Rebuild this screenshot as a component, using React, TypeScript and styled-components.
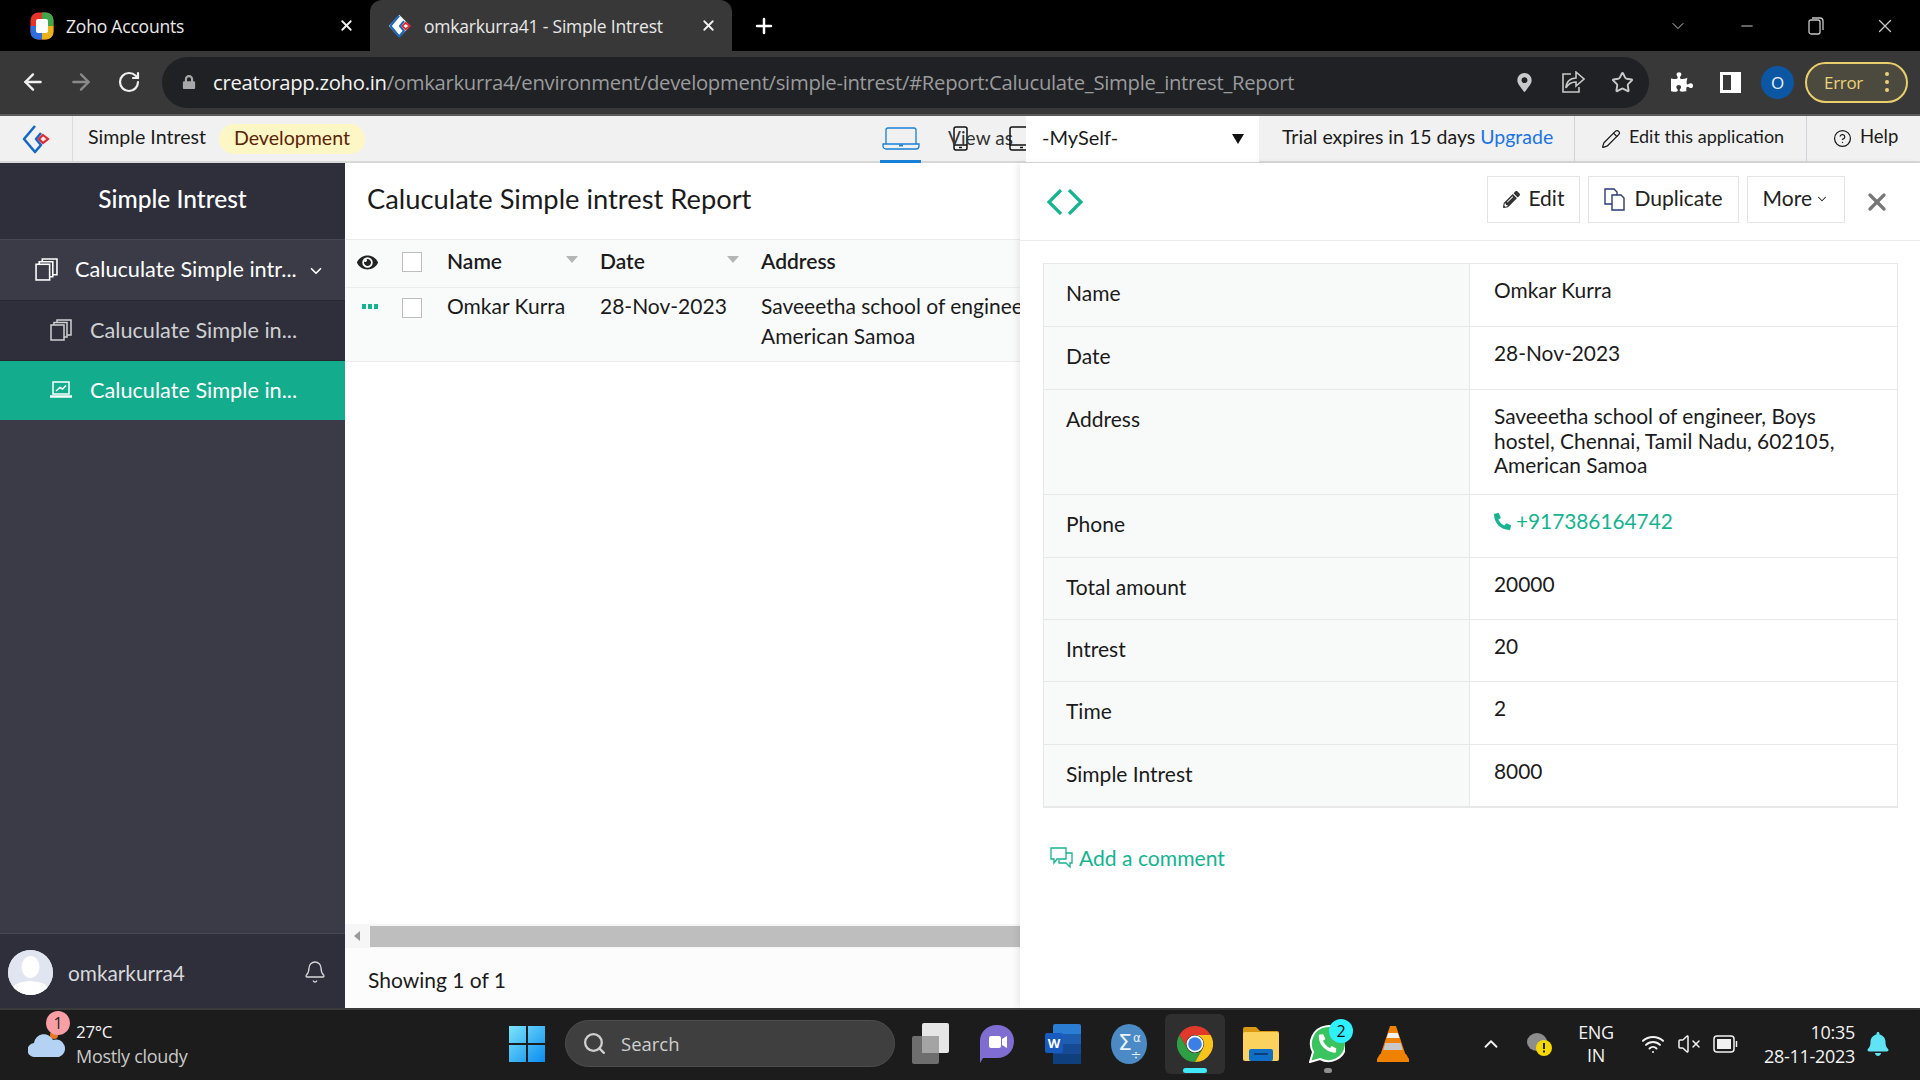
import styled, { createGlobalStyle } from 'styled-components'
import {
  ArrowLeft, ArrowRight, RotateCw, Star, ChevronDown, ChevronUp, Bell, Search, Wifi, VolumeX, X, Plus,
  Pencil, CircleHelp, Minus,
} from 'lucide-react'
import { FaEye, FaLock, FaMapMarkerAlt, FaPencilAlt, FaPhoneAlt, FaPuzzlePiece, FaBell } from 'react-icons/fa'

const GlobalStyle = createGlobalStyle`
  html, body { margin: 0; padding: 0; background: #fff; }
  * { box-sizing: border-box; }
  body { font-family: Lato, "Open Sans", sans-serif; color: #1b1b1b; }
`

const Page = styled.div`
  width: 1920px;
  height: 1080px;
  display: flex;
  flex-direction: column;
  overflow: hidden;
`

/* browser chrome */
const TabStrip = styled.div`
  height: 51px;
  background: #000;
  display: flex;
  align-items: stretch;
  font-family: "Open Sans", sans-serif;
  font-size: 17.500px;
  color: #e8e8e8;
`
const Tab = styled.div<{ $active?: boolean }>`
  width: ${(p) => (p.$active ? '362px' : '370px')};
  display: flex;
  align-items: center;
  padding-left: ${(p) => (p.$active ? '18px' : '30px')};
  background: ${(p) => (p.$active ? '#383838' : 'transparent')};
  border-radius: 12px 12px 0 0;
`
const TabTitle = styled.span`
  margin-left: 12px;
  flex: 1;
  white-space: nowrap;
  letter-spacing: -0.2px;
`
const TabClose = styled.span`
  width: 32px;
  display: flex;
  color: #f2f2f2;
`
const NewTab = styled.div`
  width: 64px;
  display: flex;
  align-items: center;
  justify-content: center;
  color: #fff;
`
const WindowControls = styled.div`
  margin-left: auto;
  display: flex;
  align-items: center;
  padding-right: 1px;
  color: #c8c8c8;
`
const WindowButton = styled.div`
  width: 69px;
  display: flex;
  justify-content: center;
`
const NavBar = styled.div`
  height: 65px;
  background: #383838;
  border-bottom: 2px solid #5a5a5a;
  display: flex;
  align-items: center;
  padding: 0 12px 1px 9px;
`
const NavButton = styled.div<{ $dim?: boolean }>`
  width: 48px;
  display: flex;
  justify-content: center;
  color: ${(p) => (p.$dim ? '#8a8a8a' : '#f0f0f0')};
`
const Omnibox = styled.div`
  margin-left: 9px;
  width: 1487px;
  height: 51px;
  border-radius: 26px;
  background: #202124;
  display: flex;
  align-items: center;
  padding: 0 2px 0 20px;
  font-family: "Open Sans", sans-serif;
  font-size: 20.300px;
  letter-spacing: -0.3px;
  color: #9a9b9d;
`
const Url = styled.span`
  margin-left: 17px;
  white-space: nowrap;
  flex: 1;
  strong { font-weight: 400; color: #f4f4f4; }
`
const OmniIcon = styled.div`
  width: 49px;
  display: flex;
  justify-content: center;
  color: #c9c9c9;
`
const ToolIcon = styled.div`
  width: 48px;
  display: flex;
  justify-content: center;
  color: #fff;
`
const PuzzleIcon = styled(ToolIcon)`
  margin-left: 9px;
`
const ProfileDot = styled.div`
  width: 33px;
  height: 33px;
  margin: 0 7px;
  border-radius: 50%;
  background: #0b57a4;
  color: #e8f0ff;
  font-size: 17px;
  font-family: "Open Sans", sans-serif;
  display: flex;
  align-items: center;
  justify-content: center;
`
const ErrorPill = styled.div`
  margin-left: 4px;
  width: 103px;
  height: 41px;
  border-radius: 21px;
  border: 2px solid #e9cf6c;
  background: #4c4a3e;
  color: #ecd277;
  font-family: "Open Sans", sans-serif;
  font-size: 17px;
  letter-spacing: -0.3px;
  display: flex;
  align-items: center;
  justify-content: space-between;
  padding: 0 17px 0 17px;
`
const MenuDots = styled.span`
  display: flex;
  flex-direction: column;
  gap: 4px;
  i { width: 4px; height: 4px; border-radius: 50%; background: #ecd277; }
`

/* app bar */
const AppBar = styled.div`
  height: 47px;
  background: #f1f1f1;
  border-bottom: 2px solid #d8d8d8;
  display: flex;
  align-items: stretch;
  font-size: 19.600px;
`
const LogoCell = styled.div`
  width: 73px;
  border-right: 1px solid #d9dde3;
  display: flex;
  align-items: center;
  justify-content: center;
`
const AppName = styled.div`
  margin-left: 15px;
  padding-bottom: 4px;
  display: flex;
  align-items: center;
  width: 131px;
  white-space: nowrap;
`
const EnvBadge = styled.div`
  align-self: center;
  width: 146px;
  height: 30px;
  padding-bottom: 2px;
  border-radius: 15px;
  background: #fdf7c5;
  color: #5b2308;
  display: flex;
  align-items: center;
  justify-content: center;
`
const LaptopTab = styled.div`
  margin-left: 515px;
  width: 41px;
  height: 47px;
  border-bottom: 3px solid #1680d6;
  display: flex;
  align-items: center;
  justify-content: center;
`
const ViewAs = styled.div`
  margin-left: 27px;
  width: 78px;
  overflow: hidden;
  display: flex;
  align-items: center;
  white-space: nowrap;
  font-size: 19px;
  color: #333;
`
const PhoneShape = styled.svg`
  margin-left: 5px;
  flex-shrink: 0;
`
const ViewAsText = styled.span`
  margin-left: -20px;
  margin-right: -4px;
  padding-bottom: 3px;
  letter-spacing: 0.1px;
`
const TabletShape = styled.svg`
  flex-shrink: 0;
`
const UserSelect = styled.div`
  width: 233px;
  background: #fff;
  display: flex;
  align-items: center;
  justify-content: space-between;
  padding: 0 15px 5px 16px;
  font-size: 20px;
  margin-bottom: -1px;
`
const Caret = styled.span`
  width: 0;
  height: 0;
  margin-top: 5px;
  border-left: 6px solid transparent;
  border-right: 6px solid transparent;
  border-top: 10px solid #111;
`
const Trial = styled.div`
  width: 316px;
  padding: 0 0 5px 23px;
  display: flex;
  align-items: center;
  white-space: nowrap;
  font-size: 19.500px;
  border-right: 1px solid #cfd3da;
  a { color: #1a73e8; margin-left: 5px; }
`
const EditApp = styled.div`
  width: 232px;
  padding-left: 26px;
  display: flex;
  align-items: center;
  gap: 8px;
  white-space: nowrap;
  font-size: 18px;
  border-right: 1px solid #cfd3da;
  span { padding-bottom: 5px; }
`
const HelpLink = styled.div`
  padding-left: 26px;
  display: flex;
  align-items: center;
  gap: 8px;
  font-size: 18.500px;
  span { padding-bottom: 5px; }
`

/* main */
const Main = styled.div`
  flex: 1;
  display: flex;
  min-height: 0;
`
const Sidebar = styled.aside`
  width: 345px;
  background: #3a3b47;
  display: flex;
  flex-direction: column;
  color: #fff;
`
const SideTitle = styled.div`
  height: 76px;
  padding-bottom: 6px;
  background: #2e2f3a;
  display: flex;
  align-items: center;
  justify-content: center;
  font-size: 24.500px;
  font-weight: 500;
`
const SideRow = styled.div<{ $kind: 'parent' | 'child' | 'active' }>`
  height: ${(p) => (p.$kind === 'parent' ? '61px' : '60px')};
  display: flex;
  align-items: center;
  padding-left: ${(p) => (p.$kind === 'parent' ? '35px' : '50px')};
  padding-bottom: 2px;
  gap: ${(p) => (p.$kind === 'parent' ? '17px' : '18px')};
  font-size: 21.700px;
  white-space: nowrap;
  background: ${(p) => (p.$kind === 'parent' ? '#3a3b47' : p.$kind === 'active' ? '#13ac8c' : '#2e2f3a')};
  color: ${(p) => (p.$kind === 'child' ? '#cfcfd2' : '#fff')};
  border-top: 1px solid ${(p) => (p.$kind === 'parent' ? '#474854' : '#26272f')};
`
const SideChevron = styled.span`
  margin-left: -7px;
  margin-top: 4px;
  display: flex;
`
const SideSpacer = styled.div`
  flex: 1;
`
const SideFooter = styled.div`
  height: 75px;
  background: #2e2f3a;
  border-top: 1px solid #474854;
  display: flex;
  align-items: center;
  padding: 2px 18px 0 8px;
  font-size: 20.800px;
  color: #d8d8da;
`
const Avatar = styled.div`
  width: 45px;
  height: 45px;
  border-radius: 50%;
  background: #dfe3ee;
  overflow: hidden;
  margin-right: 15px;
  display: flex;
  svg { display: block; }
`
const UserName = styled.span`
  flex: 1;
`

const ReportPane = styled.section`
  width: 675px;
  flex-shrink: 0;
  display: flex;
  flex-direction: column;
  overflow: hidden;
`
const ReportTitle = styled.h1`
  margin: 0;
  height: 76px;
  display: flex;
  align-items: center;
  padding: 0 0 6px 22px;
  font-size: 27.300px;
  font-weight: 400;
  white-space: nowrap;
`
const GridRow = styled.div<{ $head?: boolean }>`
  width: 1000px;
  height: ${(p) => (p.$head ? '48px' : '75px')};
  display: flex;
  align-items: flex-start;
  background: #f9fafa;
  border-top: 1px solid #ececec;
  border-bottom: ${(p) => (p.$head ? '0' : '1px solid #ececec')};
  padding-top: ${(p) => (p.$head ? '9px' : '6px')};
  font-size: 21px;
  line-height: 30px;
  font-weight: ${(p) => (p.$head ? 600 : 400)};
`
const ActionCell = styled.div`
  width: 57px;
  height: 24px;
  padding-left: 12px;
  display: flex;
  align-items: center;
  margin-top: 1px;
`
const DotsGreen = styled.span`
  display: flex;
  gap: 2px;
  margin-left: 5px;
  margin-top: -1px;
  i { width: 4px; height: 5px; background: #13b48f; }
`
const Check = styled.span<{ $low?: boolean }>`
  width: 20px;
  height: 20px;
  margin-top: ${(p) => (p.$low ? '4px' : '3px')};
  border: 1px solid #bdbdbd;
  background: #fff;
`
const NameCol = styled.div`
  margin: -3px 0 0 25px;
  width: 153px;
  position: relative;
  white-space: nowrap;
`
const DateCol = styled.div`
  margin-top: -3px;
  width: 161px;
  position: relative;
  white-space: nowrap;
`
const SortCaret = styled.span`
  position: absolute;
  right: 22px;
  top: 10px;
  border-left: 6px solid transparent;
  border-right: 6px solid transparent;
  border-top: 7px solid #b5b5b5;
`
const AddressCol = styled.div`
  margin-top: -3px;
  white-space: nowrap;
`
const EmptyGrid = styled.div`
  flex: 1;
`
const ScrollTrack = styled.div`
  height: 24px;
  background: #f6f6f6;
  display: flex;
  align-items: center;
  padding-left: 9px;
`
const ScrollArrow = styled.span`
  border-top: 5px solid transparent;
  border-bottom: 5px solid transparent;
  border-right: 6px solid #999;
`
const ScrollThumb = styled.div`
  margin-left: 10px;
  flex: 1;
  height: 21px;
  background: #bebebe;
`
const GridFooter = styled.div`
  height: 60px;
  background: #fcfcfc;
  display: flex;
  align-items: center;
  padding: 2px 0 0 23px;
  font-size: 21px;
`

const DetailPanel = styled.section`
  flex: 1;
  position: relative;
  background: #fff;
  box-shadow: -3px 0 6px rgba(0, 0, 0, 0.07);
  display: flex;
  flex-direction: column;
`
const DetailHead = styled.div`
  height: 78px;
  border-bottom: 1px solid #ececec;
  display: flex;
  align-items: center;
  padding: 0 19px 0 27px;
  gap: 8px;
`
const PagerIcon = styled.div`
  margin-right: auto;
  display: flex;
`
const ActionButton = styled.button<{ $tight?: boolean }>`
  height: 47px;
  margin-bottom: 5px;
  padding: 0 15px 4px;
  border: 1px solid #e4e4e4;
  background: #fff;
  display: flex;
  align-items: center;
  gap: ${(p) => (p.$tight ? '3px' : '8px')};
  font-family: inherit;
  font-size: 21px;
  color: #222;
  svg { margin-top: 4px; }
`
const CloseButton = styled.div`
  width: 48px;
  display: flex;
  justify-content: center;
  color: #777;
`
const DetailTable = styled.div`
  margin: 22px 22px 0 23px;
  border: 1px solid #e8e8e8;
  border-bottom-width: 2px;
`
const DetailRow = styled.div<{ $h?: number }>`
  display: grid;
  grid-template-columns: 426px 1fr;
  height: ${(p) => p.$h ?? 62.4}px;
  border-top: 1px solid #e8e8e8;
  &:first-child { border-top: 0; }
  line-height: 24.800px;
`
const FieldLabel = styled.div`
  background: #f8f9f9;
  border-right: 1px solid #e8e8e8;
  padding: 17px 0 0 22px;
  font-size: 21px;
`
const FieldValue = styled.div`
  padding: 14px 44px 0 24px;
  font-size: 20.900px;
`
const PhoneLink = styled.span`
  color: #13b48f;
  display: flex;
  align-items: center;
  gap: 5px;
  font-size: 20.800px;
`
const CommentLink = styled.div`
  margin: 37px 0 0 30px;
  display: flex;
  align-items: center;
  gap: 6px;
  color: #13b48f;
  font-size: 21.100px;
`

/* taskbar */
const Taskbar = styled.footer`
  height: 72px;
  background: #1c1c1c;
  border-top: 2px solid #3b3b3b;
  padding-bottom: 3px;
  display: flex;
  align-items: center;
  font-family: "Open Sans", sans-serif;
  color: #f2f2f2;
`
const Weather = styled.div`
  width: 494px;
  padding-left: 28px;
  display: flex;
  align-items: center;
  gap: 10px;
  position: relative;
`
const WeatherBadge = styled.span`
  position: absolute;
  left: 46px;
  top: -9px;
  width: 24px;
  height: 24px;
  border-radius: 50%;
  background: #f89fa5;
  color: #222;
  font-size: 16px;
  display: flex;
  align-items: center;
  justify-content: center;
`
const WeatherText = styled.div`
  font-size: 17px;
  letter-spacing: -0.3px;
  line-height: 24px;
  small { display: block; font-size: 18px; color: #c9c9c9; }
`
const TaskCell = styled.div<{ $on?: boolean }>`
  width: ${(p) => (p.$on ? '60px' : '66px')};
  margin: ${(p) => (p.$on ? '0 3px' : '0')};
  height: 60px;
  position: relative;
  display: flex;
  align-items: center;
  justify-content: center;
  border-radius: 6px;
  background: ${(p) => (p.$on ? '#2f2f2f' : 'transparent')};
`
const RunningBar = styled.span`
  position: absolute;
  bottom: 1px;
  left: 18px;
  width: 24px;
  height: 5px;
  border-radius: 3px;
  background: #3fe9f7;
`
const RunningDot = styled.span`
  position: absolute;
  bottom: 1px;
  left: 30px;
  width: 8px;
  height: 5px;
  border-radius: 3px;
  background: #8f8f8f;
`
const CountBadge = styled.span`
  position: absolute;
  right: 7px;
  top: 5px;
  width: 24px;
  height: 24px;
  border-radius: 50%;
  background: #2ef0ff;
  color: #111;
  font-size: 16px;
  display: flex;
  align-items: center;
  justify-content: center;
`
const SearchBox = styled.div`
  width: 330px;
  height: 47px;
  margin-left: 5px;
  margin-right: 3px;
  border-radius: 24px;
  background: #3f3f3f;
  border: 1px solid #4e4e4e;
  display: flex;
  align-items: center;
  gap: 14px;
  padding-left: 16px;
  font-size: 18.500px;
  color: #cfcfcf;
`
const Tray = styled.div`
  margin-left: 32px;
  flex: 1;
  display: flex;
  align-items: center;
`
const TrayIcon = styled.div<{ $w: number }>`
  width: ${(p) => p.$w}px;
  display: flex;
  justify-content: center;
  color: #f2f2f2;
`
const WifiCell = styled(TrayIcon)`
  margin-left: -3px;
`
const LangBlock = styled.div`
  width: 84px;
  text-align: center;
  font-size: 18px;
  line-height: 23px;
  letter-spacing: -0.3px;
`
const Clock = styled.div`
  width: 112px;
  text-align: right;
  font-size: 18px;
  line-height: 24px;
  letter-spacing: -0.3px;
`

const Stack = ({ size = 22, color = 'currentColor' }: { size?: number; color?: string }) => (
  <svg width={size} height={size} viewBox="0 0 22 22" fill="none" stroke={color} strokeWidth="1.5">
    <rect x="1" y="6" width="13" height="15" />
    <path d="M4 6V3.500h13V18h-3" />
    <path d="M7 3.500V1h14v15h-4" />
  </svg>
)

const CreatorLogo = ({ size = 30, halo }: { size?: number; halo?: boolean }) => (
  <svg width={size} height={size} viewBox="0 0 30 30" fill="none">
    {halo && <path d="M14 1 1 15l13 14 14-14z" fill="#fff" />}
    <path d="M14 2 3 15l11 13 6-7-5-6 5-6" stroke="#1668c7" strokeWidth="2.600" strokeLinejoin="round" />
    <path d="m22 11 5 4-5 4-4-4z" stroke="#e2292f" strokeWidth="2.200" />
  </svg>
)

const AccountsLogo = () => (
  <svg width="24" height="28" viewBox="0 0 24 28">
    <rect x="0.500" y="0.500" width="23" height="27" rx="8" fill="#e5352b" />
    <path d="M12 .5h4a7.500 7.500 0 0 1 7.500 7.500v6H12z" fill="#3fa64a" />
    <path d="M12 27.500h4a7.500 7.500 0 0 0 7.500-7.500v-6H12z" fill="#e9b21a" />
    <path d="M12 27.500H8A7.500 7.500 0 0 1 .5 20v-6H12z" fill="#2f6fdc" />
    <rect x="6" y="7" width="12" height="14" rx="2" fill="#fff" />
  </svg>
)

const LaptopBlue = () => (
  <svg width="38" height="23" viewBox="0 0 38 23" fill="none" stroke="#1680d6" strokeWidth="1.300">
    <path d="M4 17V3a2 2 0 0 1 2-2h26a2 2 0 0 1 2 2v14" />
    <path d="M1 17h36v2a3 3 0 0 1-3 3H4a3 3 0 0 1-3-3z" />
    <path d="M17 18.500h4" strokeWidth="1.800" />
  </svg>
)

const WindowsLogo = () => (
  <svg width="36" height="36" viewBox="0 0 36 36">
    <defs>
      <linearGradient id="win" x1="0" y1="0" x2="1" y2="1">
        <stop offset="0" stopColor="#7be4fb" />
        <stop offset="1" stopColor="#0a8bf0" />
      </linearGradient>
    </defs>
    <path d="M0 0h17v17H0zM19 0h17v17H19zM0 19h17v17H0zM19 19h17v17H19z" fill="url(#win)" />
  </svg>
)

const ChromeLogo = () => (
  <svg width="36" height="36" viewBox="0 0 36 36">
    <path d="M2.400 9A18 18 0 0 1 33.600 9H18A9 9 0 0 0 10.200 22.500Z" fill="#e0392c" />
    <path d="M2.400 9 10.200 22.500A9 9 0 0 0 25.800 22.500L18 36A18 18 0 0 1 2.400 9Z" fill="#2f9e44" />
    <path d="M33.600 9H18A9 9 0 0 1 25.800 22.500L18 36A18 18 0 0 0 33.600 9Z" fill="#f9c31c" />
    <circle cx="18" cy="18" r="8.500" fill="#fff" />
    <circle cx="18" cy="18" r="6.800" fill="#3b7fe6" />
  </svg>
)

const WordLogo = () => (
  <svg width="36" height="40" viewBox="0 0 36 40">
    <rect x="8" y="0" width="28" height="40" rx="2" fill="#2b7cd3" />
    <rect x="8" y="10" width="28" height="10" fill="#1e5eb0" />
    <rect x="8" y="20" width="28" height="10" fill="#174a94" />
    <rect x="8" y="30" width="28" height="10" fill="#103f7d" />
    <rect x="0" y="9" width="18" height="20" rx="2" fill="#185abd" />
    <text x="9" y="24" textAnchor="middle" fontSize="13" fontFamily="Open Sans" fontWeight="700" fill="#fff">W</text>
  </svg>
)

const TeamsLogo = () => (
  <svg width="34" height="38" viewBox="0 0 34 38">
    <path d="M17 0c10 0 17 7 17 16 0 10-7 17-17 17H3l-3 5V16C0 7 7 0 17 0z" fill="#7f6dd1" />
    <rect x="9" y="11" width="12" height="12" rx="2" fill="#fff" />
    <path d="m22 14 5-3v12l-5-3z" fill="#fff" />
  </svg>
)

const MathLogo = () => (
  <svg width="36" height="40" viewBox="0 0 36 40">
    <ellipse cx="18" cy="20" rx="18" ry="20" fill="#4b8ac4" />
    <text x="14" y="26" textAnchor="middle" fontSize="22" fontFamily="DejaVu Sans" fill="#e8f2fb">Σ</text>
    <text x="26" y="18" textAnchor="middle" fontSize="12" fontFamily="DejaVu Sans" fill="#e8f2fb">α</text>
    <text x="25" y="35" textAnchor="middle" fontSize="13" fontFamily="DejaVu Sans" fill="#e8f2fb">÷</text>
  </svg>
)

const FolderLogo = () => (
  <svg width="36" height="34" viewBox="0 0 36 34">
    <path d="M0 2a2 2 0 0 1 2-2h11l4 4h17a2 2 0 0 1 2 2v4H0z" fill="#d99a12" />
    <rect x="0" y="5" width="36" height="29" rx="2" fill="#fbd25e" />
    <rect x="6" y="22" width="24" height="12" rx="2" fill="#0f6fc6" />
    <rect x="11" y="26" width="14" height="2" fill="#0b3e7a" />
  </svg>
)

const WhatsappLogo = () => (
  <svg width="36" height="38" viewBox="0 0 36 38">
    <path d="M1 37l3-10A17.500 17.500 0 1 1 11 34z" fill="#39c45f" stroke="#fff" strokeWidth="2" />
    <path d="M11.500 11c0 8 6 14 14 15" fill="none" stroke="#fff" strokeWidth="3.500" strokeLinecap="round" />
    <path d="M11 10.500l3-1.500 2.500 5-3 2zM26 26.500l1.500-3-5-2.500-2 3z" fill="#fff" />
  </svg>
)

const VlcLogo = () => (
  <svg width="32" height="36" viewBox="0 0 32 36">
    <path d="M13 0h6l10 30H3z" fill="#ef8200" />
    <path d="M11.300 7h9.400l1.800 5H9.600z" fill="#f2f2f2" />
    <path d="M8.300 17h15.400l2 7H6.300z" fill="#c9c9c9" />
    <path d="M3 28h26l3 5v3H0v-3z" fill="#ef8200" />
  </svg>
)

const CloudIcon = () => (
  <svg width="38" height="26" viewBox="0 0 38 26">
    <circle cx="26" cy="4" r="4" fill="#e9781f" />
    <path d="M7 26a7 7 0 0 1-1-14 10 10 0 0 1 19-3 8.500 8.500 0 0 1 6 17z" fill="#b4d3f4" />
  </svg>
)

const TaskViewIcon = () => (
  <svg width="38" height="46" viewBox="0 0 38 46">
    <rect x="0" y="15" width="27" height="28" rx="2" fill="#6e6e6e" />
    <rect x="10" y="2" width="27" height="30" rx="2" fill="#e6e6e6" />
    <rect x="10" y="15" width="17" height="17" fill="#a4a4a4" />
  </svg>
)

const DuplicateIcon = () => (
  <svg width="22" height="24" viewBox="0 0 22 24" fill="none" stroke="#2a3a7a" strokeWidth="1.400">
    <path d="M1 2h9l3 3v12H1z" />
    <path d="M8 8h9l3 3v12H8z" fill="#fff" />
  </svg>
)

const ReportIcon = () => (
  <svg width="22" height="17" viewBox="0 0 22 17" fill="none" stroke="#fff" strokeWidth="1.500">
    <rect x="3" y="1" width="16" height="12" />
    <path d="M0 15.500h22" strokeWidth="2.500" />
    <path d="m6 10 4-3.500 2.500 1.500 3.500-3.500" />
  </svg>
)

const PagerChevrons = () => (
  <svg width="36" height="26" viewBox="0 0 36 26" fill="none" stroke="#13b48f" strokeWidth="3.200">
    <path d="M14 1 2 13l12 12M22 1l12 12-12 12" />
  </svg>
)

const CommentIcon = () => (
  <svg width="23" height="22" viewBox="0 0 23 22" fill="none" stroke="#13b48f" strokeWidth="1.300">
    <path d="M1 1h15v11H7l-3 4v-4H1z" />
    <path d="M16 6h6v10h-2v4l-4-4H9v-3" />
  </svg>
)

const AvatarFace = () => (
  <svg width="45" height="45" viewBox="0 0 45 45">
    <rect width="45" height="45" fill="#e1e5ef" />
    <ellipse cx="22.500" cy="17" rx="9" ry="11" fill="#fff" />
    <path d="M2 45c1-11 9-13 20-14 12 1 20 3 21 14z" fill="#fff" />
  </svg>
)

const SidePanelIcon = () => (
  <svg width="21" height="21" viewBox="0 0 21 21">
    <path d="M0 0h21v21H0z" fill="#fff" />
    <path d="M3 3h8v15H3z" fill="#383838" />
  </svg>
)

const ShareIcon = () => (
  <svg width="23" height="23" viewBox="0 0 23 23" fill="none" stroke="#c9c9c9" strokeWidth="1.600">
    <path d="M14 1l8 7-8 7v-4c-5 0-8 2-10 6 0-6 4-10 10-10z" />
    <path d="M9 3H1v18h16v-5" />
  </svg>
)

const RestoreIcon = () => (
  <svg width="16" height="18" viewBox="0 0 16 18" fill="none" stroke="#c8c8c8" strokeWidth="1.300">
    <rect x="1" y="3" width="11" height="14" rx="2" />
    <path d="M4 1h8a3 3 0 0 1 3 3v9" />
  </svg>
)

const OneDriveWarn = () => (
  <svg width="26" height="26" viewBox="0 0 26 26">
    <ellipse cx="11" cy="11" rx="10" ry="9" fill="#8d8d8d" />
    <circle cx="18" cy="17" r="8" fill="#f4d800" />
    <path d="M17 12h2v6h-2zM17 19.500h2v2h-2z" fill="#222" />
  </svg>
)

const BatteryIcon = () => (
  <svg width="25" height="18" viewBox="0 0 25 18" fill="none" stroke="#f2f2f2" strokeWidth="1.500">
    <rect x="1" y="1" width="20" height="16" rx="3" />
    <rect x="4" y="4" width="14" height="10" fill="#f2f2f2" stroke="none" />
    <path d="M23.500 6v6" />
  </svg>
)

const detailRows: { label: string; value: string; h?: number }[] = [
  { label: 'Name', value: 'Omkar Kurra' },
  { label: 'Date', value: '28-Nov-2023' },
  { label: 'Address', value: 'Saveeetha school of engineer, Boys hostel, Chennai, Tamil Nadu, 602105, American Samoa', h: 105.5 },
]
const moreRows = [
  { label: 'Total amount', value: '20000' },
  { label: 'Intrest', value: '20' },
  { label: 'Time', value: '2' },
  { label: 'Simple Intrest', value: '8000' },
]

export default function App() {
  return (
    <Page>
      <GlobalStyle />
      <TabStrip>
        <Tab>
          <AccountsLogo />
          <TabTitle>Zoho Accounts</TabTitle>
          <TabClose><X size={17} strokeWidth={2.500} /></TabClose>
        </Tab>
        <Tab $active>
          <CreatorLogo size={24} halo />
          <TabTitle>omkarkurra41 - Simple Intrest</TabTitle>
          <TabClose><X size={17} strokeWidth={2.500} /></TabClose>
        </Tab>
        <NewTab><Plus size={24} strokeWidth={2.500} /></NewTab>
        <WindowControls>
          <WindowButton><ChevronDown size={20} strokeWidth={1.200} /></WindowButton>
          <WindowButton><Minus size={18} strokeWidth={1.400} /></WindowButton>
          <WindowButton><RestoreIcon /></WindowButton>
          <WindowButton><X size={22} strokeWidth={1.300} /></WindowButton>
        </WindowControls>
      </TabStrip>
      <NavBar>
        <NavButton><ArrowLeft size={26} strokeWidth={2.200} /></NavButton>
        <NavButton $dim><ArrowRight size={26} strokeWidth={2.200} /></NavButton>
        <NavButton><RotateCw size={24} strokeWidth={2.200} /></NavButton>
        <Omnibox>
          <FaLock size={14} color="#a8a8a8" />
          <Url><strong>creatorapp.zoho.in</strong>/omkarkurra4/environment/development/simple-intrest/#Report:Caluculate_Simple_intrest_Report</Url>
          <OmniIcon><FaMapMarkerAlt size={19} /></OmniIcon>
          <OmniIcon><ShareIcon /></OmniIcon>
          <OmniIcon><Star size={23} strokeWidth={2} /></OmniIcon>
        </Omnibox>
        <PuzzleIcon><FaPuzzlePiece size={22} /></PuzzleIcon>
        <ToolIcon><SidePanelIcon /></ToolIcon>
        <ProfileDot>O</ProfileDot>
        <ErrorPill>Error<MenuDots><i /><i /><i /></MenuDots></ErrorPill>
      </NavBar>
      <AppBar>
        <LogoCell><CreatorLogo /></LogoCell>
        <AppName>Simple Intrest</AppName>
        <EnvBadge>Development</EnvBadge>
        <LaptopTab><LaptopBlue /></LaptopTab>
        <ViewAs>
          <PhoneShape width="15" height="25" viewBox="0 0 15 25" fill="none" stroke="#111" strokeWidth="1.500">
            <rect x="1" y="1" width="13" height="23" rx="2" />
            <path d="M1 19h13M6 21.500h3" />
          </PhoneShape>
          <ViewAsText>View as</ViewAsText>
          <TabletShape width="30" height="25" viewBox="0 0 30 25" fill="none" stroke="#111" strokeWidth="1.500">
            <rect x="1" y="1" width="28" height="23" rx="2" />
            <path d="M1 19h28M11 21.500h3" />
          </TabletShape>
        </ViewAs>
        <UserSelect>-MySelf-<Caret /></UserSelect>
        <Trial>Trial expires in 15 days<a>Upgrade</a></Trial>
        <EditApp><Pencil size={20} strokeWidth={1.500} /><span>Edit this application</span></EditApp>
        <HelpLink><CircleHelp size={19} strokeWidth={1.600} /><span>Help</span></HelpLink>
      </AppBar>
      <Main>
        <Sidebar>
          <SideTitle>Simple Intrest</SideTitle>
          <SideRow $kind="parent"><Stack size={23} />Caluculate Simple intr...<SideChevron><ChevronDown size={18} strokeWidth={2.200} /></SideChevron></SideRow>
          <SideRow $kind="child"><Stack size={22} />Caluculate Simple in...</SideRow>
          <SideRow $kind="active"><ReportIcon />Caluculate Simple in...</SideRow>
          <SideSpacer />
          <SideFooter>
            <Avatar><AvatarFace /></Avatar>
            <UserName>omkarkurra4</UserName>
            <Bell size={24} strokeWidth={1.300} />
          </SideFooter>
        </Sidebar>
        <ReportPane>
          <ReportTitle>Caluculate Simple intrest Report</ReportTitle>
          <GridRow $head>
            <ActionCell><FaEye size={21} color="#222" /></ActionCell>
            <Check />
            <NameCol>Name<SortCaret /></NameCol>
            <DateCol>Date<SortCaret /></DateCol>
            <AddressCol>Address</AddressCol>
          </GridRow>
          <GridRow>
            <ActionCell><DotsGreen><i /><i /><i /></DotsGreen></ActionCell>
            <Check $low />
            <NameCol>Omkar Kurra</NameCol>
            <DateCol>28-Nov-2023</DateCol>
            <AddressCol>Saveeetha school of engineer, Boys hostel<br />American Samoa</AddressCol>
          </GridRow>
          <EmptyGrid />
          <ScrollTrack><ScrollArrow /><ScrollThumb /></ScrollTrack>
          <GridFooter>Showing 1 of 1</GridFooter>
        </ReportPane>
        <DetailPanel>
          <DetailHead>
            <PagerIcon><PagerChevrons /></PagerIcon>
            <ActionButton><FaPencilAlt size={17} color="#333" />Edit</ActionButton>
            <ActionButton><DuplicateIcon />Duplicate</ActionButton>
            <ActionButton $tight>More<ChevronDown size={14} strokeWidth={1.800} /></ActionButton>
            <CloseButton><X size={28} strokeWidth={2.800} /></CloseButton>
          </DetailHead>
          <DetailTable>
            {detailRows.map((r) => (
              <DetailRow key={r.label} $h={r.h}>
                <FieldLabel>{r.label}</FieldLabel>
                <FieldValue>{r.value}</FieldValue>
              </DetailRow>
            ))}
            <DetailRow>
              <FieldLabel>Phone</FieldLabel>
              <FieldValue><PhoneLink><FaPhoneAlt size={17} />+917386164742</PhoneLink></FieldValue>
            </DetailRow>
            {moreRows.map((r) => (
              <DetailRow key={r.label}>
                <FieldLabel>{r.label}</FieldLabel>
                <FieldValue>{r.value}</FieldValue>
              </DetailRow>
            ))}
          </DetailTable>
          <CommentLink><CommentIcon />Add a comment</CommentLink>
        </DetailPanel>
      </Main>
      <Taskbar>
        <Weather>
          <CloudIcon />
          <WeatherBadge>1</WeatherBadge>
          <WeatherText>27°C<small>Mostly cloudy</small></WeatherText>
        </Weather>
        <TaskCell><WindowsLogo /></TaskCell>
        <SearchBox><Search size={25} strokeWidth={2.200} />Search</SearchBox>
        <TaskCell><TaskViewIcon /></TaskCell>
        <TaskCell><TeamsLogo /></TaskCell>
        <TaskCell><WordLogo /></TaskCell>
        <TaskCell><MathLogo /></TaskCell>
        <TaskCell $on><ChromeLogo /><RunningBar /></TaskCell>
        <TaskCell><FolderLogo /></TaskCell>
        <TaskCell><WhatsappLogo /><CountBadge>2</CountBadge><RunningDot /></TaskCell>
        <TaskCell><VlcLogo /></TaskCell>
        <Tray>
          <TrayIcon $w={66}><ChevronUp size={22} strokeWidth={2} /></TrayIcon>
          <TrayIcon $w={30}><OneDriveWarn /></TrayIcon>
          <LangBlock>ENG<br />IN</LangBlock>
          <WifiCell $w={36}><Wifi size={24} strokeWidth={2} /></WifiCell>
          <TrayIcon $w={36}><VolumeX size={24} strokeWidth={1.500} /></TrayIcon>
          <TrayIcon $w={36}><BatteryIcon /></TrayIcon>
          <Clock>10:35<br />28-11-2023</Clock>
          <TrayIcon $w={46}><FaBell size={24} color="#5fe3f5" /></TrayIcon>
        </Tray>
      </Taskbar>
    </Page>
  )
}
